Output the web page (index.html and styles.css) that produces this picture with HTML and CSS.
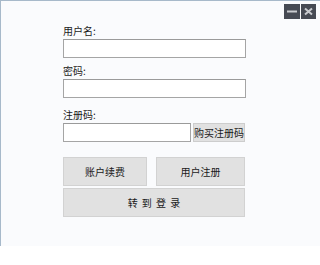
FILE: index.html
```html
<!DOCTYPE html>
<html lang="zh-CN">

<head>
    <meta charset="UTF-8">
    <title>登录</title>
    <link rel="stylesheet" href="styles.css">
</head>

<body>
    <div class="window">
        <div class="title-bar">
            <button class="win-btn" title="最小化">
                <svg width="16" height="15" viewBox="0 0 16 15"><path d="M3 7.5h10" stroke="#c9cbcf" stroke-width="2"/></svg>
            </button>
            <button class="win-btn" title="关闭">
                <svg width="15" height="15" viewBox="0 0 15 15"><path d="M4 4.5l7 6M11 4.5l-7 6" stroke="#c9cbcf" stroke-width="2"/></svg>
            </button>
        </div>

        <div class="form">
            <label class="field-label first">用户名:</label>
            <input type="text" class="text-input">

            <label class="field-label">密码:</label>
            <input type="password" class="text-input">

            <label class="field-label third">注册码:</label>
            <div class="code-row">
                <input type="text" class="text-input">
                <button class="btn small">购买注册码</button>
            </div>

            <div class="action-row">
                <button class="btn big">账户续费</button>
                <button class="btn big">用户注册</button>
            </div>
            <button class="btn big wide">转 到 登 录</button>
        </div>
    </div>
</body>

</html>
```

FILE: styles.css
```css
body {
    margin: 0;
    background-color: #ffffff;
    font-family: "Noto Sans CJK SC", "Noto Sans", sans-serif;
    font-size: 10px;
    color: #1a1a1a;
}

.window {
    width: 319px;
    height: 245px;
    background-color: #fafbfd;
    border-left: 1px solid #a7b9ca;
    border-top: 1px solid #a7b9ca;
}

.title-bar {
    display: flex;
    justify-content: flex-end;
    gap: 1px;
    padding: 3px 4px 0 0;
}

.win-btn {
    width: 16px;
    height: 15px;
    padding: 0;
    border: none;
    background-color: #464a53;
    display: flex;
    align-items: center;
    justify-content: center;
}

.win-btn:last-child {
    width: 15px;
}

.form {
    display: flex;
    flex-direction: column;
    width: 183px;
    margin-left: 62px;
}

.field-label {
    display: block;
    line-height: 12px;
    height: 12px;
    margin: 7px 0 2px 0;
}

.field-label.first {
    margin-top: 6px;
}

.field-label.third {
    margin-top: 11px;
}

.text-input {
    box-sizing: border-box;
    width: 183px;
    height: 19px;
    margin: 0;
    padding: 0 3px;
    background-color: #ffffff;
    border: 1px solid #a5a5a5;
    border-top-color: #9a9a9a;
    font-family: inherit;
    font-size: 10px;
}

.code-row {
    display: flex;
    gap: 2px;
    align-items: flex-start;
}

.code-row .text-input {
    width: 128px;
}

.btn {
    box-sizing: border-box;
    margin: 0;
    padding: 0;
    background-color: #e1e1e1;
    border: 1px solid #d2d2d2;
    color: #1a1a1a;
    font-family: inherit;
    font-size: 10px;
    white-space: nowrap;
}

.btn.small {
    width: 52px;
    height: 19px;
    line-height: 17px;
    border-color: #cdcdcd;
}

.btn.big {
    height: 29px;
}

.action-row {
    display: grid;
    grid-template-columns: 84px 89px;
    gap: 9px;
    margin-top: 15px;
    margin-bottom: 2px;
}

.btn.wide {
    width: 182px;
    letter-spacing: 1px;
    padding-left: 1px;
}
```
